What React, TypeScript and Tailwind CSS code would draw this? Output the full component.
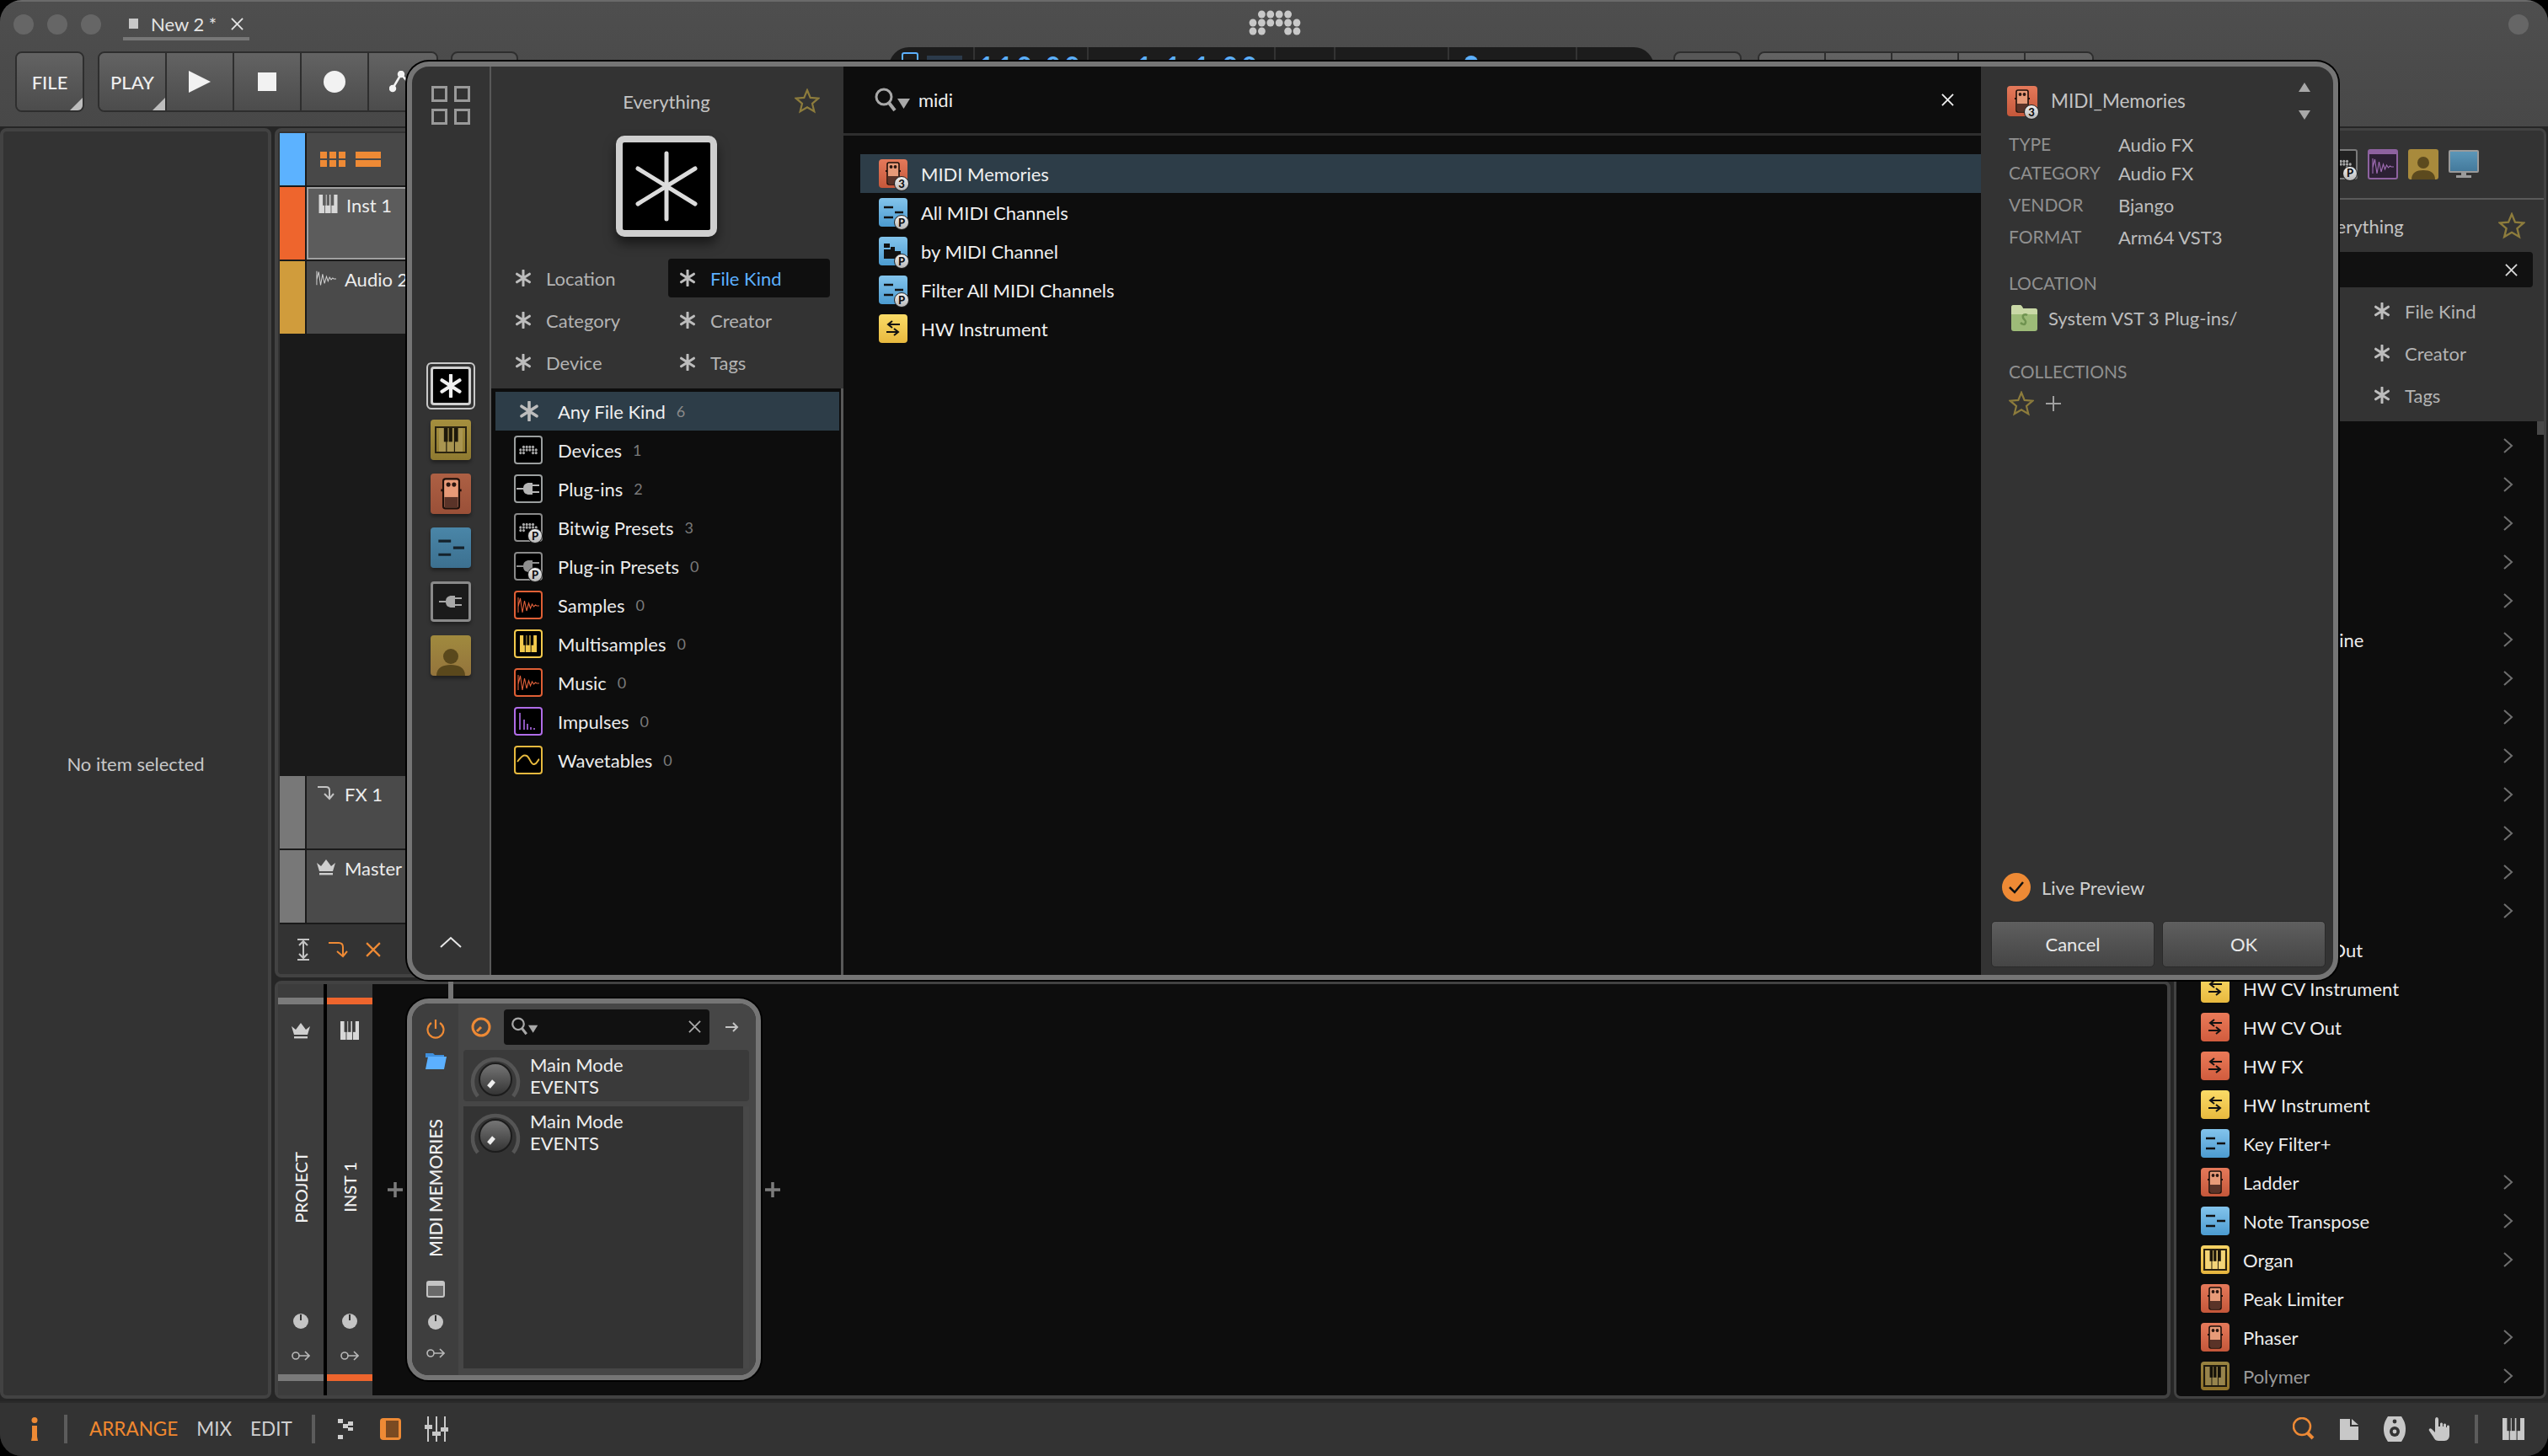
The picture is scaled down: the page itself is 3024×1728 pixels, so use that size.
// App.tsx
import type { ReactNode } from "react";

// --- small drawn glyphs ---
function Aster({ size = 20, color = "#bdbdbd" }: { size?: number; color?: string }) {
  return (
    <svg width={size} height={size} viewBox="0 0 20 20" fill="none" stroke={color} strokeWidth="3" strokeLinecap="round">
      <path d="M10 1v18M2.5 5.2l15 9.6M17.5 5.2l-15 9.6" />
    </svg>
  );
}

function Star({ size = 30, color = "#8d7c3c" }: { size?: number; color?: string }) {
  return (
    <svg width={size} height={size} viewBox="0 0 30 30" fill="none" stroke={color} strokeWidth="2.2">
      <path d="M15 2l3.7 8.9 9.6.8-7.3 6.2 2.3 9.4L15 22.3l-8.3 5 2.3-9.4-7.3-6.2 9.6-.8z" />
    </svg>
  );
}

function Close({ size = 16, color = "#d8d8d8", width = 2 }: { size?: number; color?: string; width?: number }) {
  return (
    <svg width={size} height={size} viewBox="0 0 16 16" fill="none" stroke={color} strokeWidth={width}>
      <path d="M1 1l14 14M15 1L1 15" />
    </svg>
  );
}

function Chevron() {
  return (
    <svg width="12" height="20" viewBox="0 0 12 20" fill="none" stroke="#6e6e6e" strokeWidth="2">
      <path d="M1 2l9 8-9 8" />
    </svg>
  );
}

function SearchDrop({ scale = 1 }: { scale?: number }) {
  return (
    <svg width={44 * scale} height={30 * scale} viewBox="0 0 44 30" fill="none">
      <circle cx="12" cy="11" r="9" stroke="#a8a8a8" strokeWidth="3" />
      <path d="M18 18l7 9" stroke="#a8a8a8" strokeWidth="4" />
      <path d="M28 13h15l-7.5 12z" fill="#a8a8a8" />
    </svg>
  );
}

function BitwigDots({ color = "#c8c8c8", w = 62, h = 30 }: { color?: string; w?: number; h?: number }) {
  const xs = [5, 15.4, 25.8, 36.2, 46.6, 57];
  const rows: [number, number[]][] = [
    [5, [1, 2, 3, 4]],
    [15, [0, 1, 2, 3, 4, 5]],
    [25, [0, 1, 4, 5]],
  ];
  return (
    <svg width={w} height={h} viewBox="0 0 62 30" fill={color}>
      {rows.map(([y, idx]) => idx.map((i) => <ellipse key={`${y}-${i}`} cx={xs[i]} cy={y} rx="4.4" ry="4.6" />))}
    </svg>
  );
}

function PianoGlyph({ w = 24, h = 24, color = "#d8d8d8", dark = "#4a4a4a" }: { w?: number; h?: number; color?: string; dark?: string }) {
  return (
    <svg width={w} height={h} viewBox="0 0 24 24">
      <rect x="0" y="0" width="24" height="24" fill={color} />
      <path d="M7.6 24V0M15.8 24V0" stroke={dark} strokeWidth="1" />
      <rect x="5" y="0" width="4" height="14" fill={dark} />
      <rect x="10" y="0" width="3.6" height="14" fill={dark} />
      <rect x="15.4" y="0" width="4" height="14" fill={dark} />
    </svg>
  );
}

function WaveGlyph({ color = "#e0603a", w = 26, h = 20 }: { color?: string; w?: number; h?: number }) {
  return (
    <svg width={w} height={h} viewBox="0 0 26 20" fill="none" stroke={color} strokeWidth="1.1">
      <path d="M1 1v18M1 12L3.5 2 6 19 8.5 5 11 17l2.5-9 2 6 2-5 2 3 2-2 1.5 1h3" />
    </svg>
  );
}

function PlugGlyph({ color = "#b4b4b4" }: { color?: string }) {
  return (
    <svg width="28" height="20" viewBox="0 0 28 20">
      <path d="M0 9h8v2H0z" fill={color} />
      <path d="M8 10c0-5 3-7 7-7h4v14h-4c-4 0-7-2-7-7z" fill={color} />
      <path d="M19 5h8v2h-8zM19 13h8v2h-8z" fill={color} />
    </svg>
  );
}

function DotsGlyph() {
  return <BitwigDots w={22} h={12} color="#a9a9a9" />;
}

function PedalGlyph({ scale = 1 }: { scale?: number }) {
  return (
    <svg width={20 * scale} height={28 * scale} viewBox="0 0 20 28">
      <rect x="3" y="1" width="14" height="26" rx="2" fill="#e79a78" stroke="#1d0f0a" strokeWidth="1.6" />
      <rect x="4" y="17" width="12" height="9" fill="#5a3328" />
      <circle cx="7.5" cy="6" r="1.9" fill="#2a1510" />
      <circle cx="12.5" cy="6" r="1.9" fill="#2a1510" />
      <path d="M1 11h2M17 11h2" stroke="#1d0f0a" strokeWidth="2" />
    </svg>
  );
}

function LinesGlyph({ color = "#111", scale = 1 }: { color?: string; scale?: number }) {
  return (
    <svg width={24 * scale} height={18 * scale} viewBox="0 0 24 18" stroke={color} strokeWidth="2.4">
      <path d="M1 3h11M14 9h10M1 15h11" />
    </svg>
  );
}

function ArrowsGlyph() {
  return (
    <svg width="18" height="20" viewBox="0 0 18 20" fill="none" stroke="#111" strokeWidth="2">
      <path d="M17 5H3M8 1L3 5l5 4" />
      <path d="M1 14h14M10 10l5 4-5 4" />
    </svg>
  );
}

function Badge({ text }: { text: string }) {
  return (
    <span className="absolute -right-[2px] -bottom-[4px] flex h-[18px] w-[18px] items-center justify-center rounded-full border border-[#222] bg-gradient-to-b from-[#f0f0f0] to-[#b8b8b8] text-[13px] leading-none font-black text-[#111]">
      {text}
    </span>
  );
}

type TileKind = "pedal" | "note" | "notefold" | "hwy" | "hwr" | "piano";

function Tile({ kind, badge, fade, big }: { kind: TileKind; badge?: string; fade?: boolean; big?: boolean }) {
  const bg: Record<TileKind, string> = {
    pedal: "bg-gradient-to-b from-[#e5795a] to-[#c4573a]",
    note: "bg-gradient-to-b from-[#83c4ec] to-[#4b9bd0]",
    notefold: "bg-gradient-to-b from-[#83c4ec] to-[#4b9bd0]",
    hwy: "bg-gradient-to-b from-[#fadb66] to-[#e8b93e]",
    hwr: "bg-gradient-to-b from-[#ea7a58] to-[#d15c3e]",
    piano: "bg-gradient-to-b from-[#f5d264] to-[#e6b53e]",
  };
  return (
    <div className={`relative flex ${big ? "h-[36px] w-[36px]" : "h-[34px] w-[34px]"} shrink-0 items-center justify-center rounded-[4px] ${bg[kind]} ${fade ? "opacity-60" : ""}`}>
      {kind === "pedal" && <PedalGlyph />}
      {kind === "note" && <LinesGlyph />}
      {kind === "notefold" && (
        <svg width="24" height="20" viewBox="0 0 24 20" fill="#111">
          <path d="M1 1h7v5H1zM1 8h8V5h5v5h7v9H1z" />
        </svg>
      )}
      {(kind === "hwy" || kind === "hwr") && <ArrowsGlyph />}
      {kind === "piano" && (
        <div className="border-2 border-[#2a2110]">
          <PianoGlyph w={24} h={22} color="#f3d479" dark="#1a1408" />
        </div>
      )}
      {badge && <Badge text={badge} />}
    </div>
  );
}

function OutlineIcon({ border, badge, children }: { border: string; badge?: boolean; children: ReactNode }) {
  return (
    <div className={`relative flex h-[34px] w-[34px] shrink-0 items-center justify-center rounded-[4px] border-2 ${border} bg-black`}>
      {children}
      {badge && <Badge text="P" />}
    </div>
  );
}

function Knob() {
  return (
    <svg width="60" height="58" viewBox="0 0 60 58" fill="none">
      <defs>
        <linearGradient id="knobfill" x1="0" y1="0" x2="0" y2="1">
          <stop offset="0" stopColor="#777" />
          <stop offset="1" stopColor="#333" />
        </linearGradient>
      </defs>
      <path d="M9 50A27 27 0 1 1 51 50" stroke="#555" strokeWidth="4.5" />
      <circle cx="30" cy="30" r="19" fill="url(#knobfill)" stroke="#1c1c1c" strokeWidth="2" />
      <path d="M22 39l6-7" stroke="#eee" strokeWidth="5" />
    </svg>
  );
}

function MiniCrown({ w = 24, h = 20, color = "#cfcfcf" }: { w?: number; h?: number; color?: string }) {
  return (
    <svg width={w} height={h} viewBox="0 0 24 20" fill={color}>
      <path d="M1 5l5 4 6-8 6 8 5-4-3 10H4z" />
      <rect x="4" y="17" width="16" height="2.4" />
    </svg>
  );
}

function PieDot() {
  return (
    <svg width="18" height="18" viewBox="0 0 18 18">
      <circle cx="9" cy="9" r="9" fill="#c4c4c4" />
      <path d="M9 1v7" stroke="#333" strokeWidth="2" />
    </svg>
  );
}

function KeyArrow() {
  return (
    <svg width="22" height="12" viewBox="0 0 22 12" fill="none" stroke="#b8b8b8" strokeWidth="1.6">
      <circle cx="5" cy="6" r="4" />
      <path d="M9 6h12M16 1l5 5-5 5" />
    </svg>
  );
}

function Plus({ size = 18, color = "#7c7c7c", width = 3.5 }: { size?: number; color?: string; width?: number }) {
  return (
    <svg width={size} height={size} viewBox="0 0 18 18" stroke={color} strokeWidth={width}>
      <path d="M9 0v18M0 9h18" />
    </svg>
  );
}

// --- header ---
function TransportBtn({ children, corner, w = "w-[80px]" }: { children?: ReactNode; corner?: boolean; w?: string }) {
  return (
    <div className={`relative flex h-full ${w} items-center justify-center border-r-2 border-[#2e2e2e] bg-gradient-to-b from-[#636363] to-[#4c4c4c] last:border-r-0`}>
      {children}
      {corner && <span className="absolute right-0 bottom-0 h-0 w-0 border-b-[15px] border-l-[15px] border-b-[#bdbdbd] border-l-transparent" />}
    </div>
  );
}

function Header() {
  return (
    <div className="h-[150px] shrink-0 border-t-2 border-[#6a6a6a] bg-gradient-to-b from-[#4e4e4e] to-[#484848]">
      <div className="flex h-[54px] items-center pl-[16px]">
        <div className="flex gap-[16px]">
          <span className="h-[24px] w-[24px] rounded-full bg-[#666]" />
          <span className="h-[24px] w-[24px] rounded-full bg-[#666]" />
          <span className="h-[24px] w-[24px] rounded-full bg-[#666]" />
        </div>
        <div className="ml-[26px] flex h-[36px] w-[150px] items-center self-start mt-[10px] border-b-4 border-[#777] pl-[7px] text-[22px] text-[#e4e4e4]">
          <span className="mr-[15px] h-[12px] w-[11px] bg-[#c8c8c8]" />
          <span className="w-[95px]">New 2 *</span>
          <Close size={15} color="#e4e4e4" />
        </div>
        <div className="ml-[1186px] self-start mt-[10px]">
          <BitwigDots />
        </div>
        <span className="ml-auto mr-[23px] h-[24px] w-[24px] rounded-full bg-[#666]" />
      </div>
      <div className="flex h-[94px] items-start pl-[18px]">
        <div className="mt-[5px] flex h-[72px] w-[82px] overflow-hidden rounded-[8px] border-2 border-[#2e2e2e]">
          <TransportBtn corner w="w-full">
            <span className="text-[22px] font-medium text-[#eee]">FILE</span>
          </TransportBtn>
        </div>
        <div className="mt-[5px] ml-[16px] flex h-[72px] overflow-hidden rounded-[8px] border-2 border-[#2e2e2e]">
          <TransportBtn corner>
            <span className="text-[22px] font-medium text-[#eee]">PLAY</span>
          </TransportBtn>
          <TransportBtn>
            <svg width="26" height="26" viewBox="0 0 26 26" fill="#f2f2f2">
              <path d="M0 0l26 13L0 26z" />
            </svg>
          </TransportBtn>
          <TransportBtn>
            <span className="h-[22px] w-[22px] bg-[#f2f2f2]" />
          </TransportBtn>
          <TransportBtn>
            <span className="h-[26px] w-[26px] rounded-full bg-[#f2f2f2]" />
          </TransportBtn>
          <TransportBtn>
            <svg width="32" height="26" viewBox="0 0 32 26" fill="none" stroke="#f2f2f2" strokeWidth="2.5">
              <circle cx="4" cy="21" r="3" fill="#f2f2f2" />
              <circle cx="14" cy="4" r="3" fill="#f2f2f2" />
              <path d="M4 21L14 4l12 14" />
            </svg>
          </TransportBtn>
        </div>
        <div className="mt-[5px] ml-[15px] h-[72px] w-[80px] rounded-[8px] border-2 border-[#2e2e2e] bg-[#575757]" />
        <div className="ml-[440px] flex h-[60px] w-[908px] rounded-t-[24px] bg-[#1c1c1c] text-[#5cb0ff]">
          <div className="flex w-[102px] gap-[10px] border-r-2 border-[#333] pl-[15px] pt-[6px]">
            <span className="block h-[20px] w-[20px] rounded-[3px] border-2 border-[#5cb0ff]" />
            <span className="mt-[4px] block h-[20px] w-[42px] bg-[#2b3a4a]" />
          </div>
          <div className="w-[135px] border-r-2 border-[#333] pt-[7px] text-center text-[32px] leading-[32px] font-bold tracking-[4px]">110.00</div>
          <div className="w-[222px] border-r-2 border-[#333] pt-[7px] pr-[16px] text-right text-[32px] leading-[32px] font-bold tracking-[4px]">1.1.1.00</div>
          <div className="w-[71px] border-r-2 border-[#333]" />
          <div className="w-[135px] border-r-2 border-[#333]" />
          <div className="w-[152px] border-r-2 border-[#333] pl-[18px] pt-[10px]">
            <span className="block h-[16px] w-[16px] rounded-full bg-[#5cb0ff]" />
          </div>
          <div className="flex-1" />
        </div>
        <div className="mt-[5px] ml-[23px] h-[72px] w-[81px] rounded-[8px] border-2 border-[#2e2e2e] bg-[#575757]" />
        <div className="mt-[5px] ml-[19px] flex h-[72px] overflow-hidden rounded-[8px] border-2 border-[#2e2e2e]">
          <TransportBtn w="w-[79px]" />
          <TransportBtn w="w-[79px]" />
          <TransportBtn w="w-[79px]" />
          <TransportBtn w="w-[79px]" />
          <TransportBtn w="w-[79px]" />
        </div>
      </div>
    </div>
  );
}

// --- arranger ---
function TrackRow({ strip, name, icon, selected, h = "h-[86px]" }: { strip: string; name?: string; icon?: ReactNode; selected?: boolean; h?: string }) {
  return (
    <div className={`flex ${h} gap-[2px]`}>
      <div className={`w-[30px] ${strip}`} />
      <div className={`flex flex-1 gap-[9px] pl-[10px] ${selected ? "border-2 border-[#a0a0a0] bg-[#5c5c5c] pt-[5px]" : "bg-[#4a4a4a] pt-[7px]"}`}>
        <div className="flex h-[26px] w-[26px] items-center justify-center">{icon}</div>
        <span className="text-[22px] leading-[30px] text-[#ececec]">{name}</span>
      </div>
    </div>
  );
}

function Arranger() {
  return (
    <div className="flex h-[1008px] shrink-0 rounded-[8px] border-[4px] border-[#424242] bg-[#333] pl-[2px] pt-[2px]">
      <div className="flex w-[500px] flex-col gap-[2px] bg-[#1a1a1a]">
        <div className="flex h-[62px] gap-[2px]">
          <div className="w-[30px] bg-[#5cb2ff]" />
          <div className="flex flex-1 items-center gap-[12px] bg-[#484848] pl-[16px]">
            <svg width="30" height="18" viewBox="0 0 30 18" fill="#ee8a35">
              <path d="M0 0h8v8H0zM11 0h8v8h-8zM22 0h8v8h-8zM0 10h8v8H0zM11 10h8v8h-8zM22 10h8v8h-8z" />
            </svg>
            <svg width="30" height="18" viewBox="0 0 30 18" fill="#ee8a35">
              <path d="M0 0h30v8H0zM0 10h30v8H0z" />
            </svg>
          </div>
        </div>
        <TrackRow strip="bg-[#ee652d]" name="Inst 1" icon={<PianoGlyph w={23} h={22} color="#d8d8d8" dark="#5c5c5c" />} selected />
        <TrackRow strip="bg-[#d09c3c]" name="Audio 2" icon={<WaveGlyph color="#cfcfcf" w={24} h={22} />} />
        <div className="flex-1 bg-[#1a1a1a]" />
        <TrackRow strip="bg-[#787878]" name="FX 1" icon={
          <svg width="20" height="18" viewBox="0 0 20 18" fill="none" stroke="#c4c4c4" strokeWidth="2">
            <path d="M0 2h10c3 0 4 2 4 4v9M8 10l6 6 5-6" />
          </svg>
        } />
        <TrackRow strip="bg-[#787878]" name="Master" icon={<MiniCrown />} />
        <div className="flex h-[59px] items-center gap-[21px] bg-[#333] pl-[20px]">
          <svg width="16" height="26" viewBox="0 0 16 26" fill="none" stroke="#c4c4c4" strokeWidth="2">
            <path d="M1 1h14M1 25h14M8 3v20M3 8l5-5 5 5M3 18l5 5 5-5" />
          </svg>
          <svg width="24" height="20" viewBox="0 0 24 20" fill="none" stroke="#ee8a35" strokeWidth="2">
            <path d="M1 2h12c3 0 5 2 5 5v10M11 12l7 6 5-6" />
          </svg>
          <Close size={18} color="#ee8a35" />
        </div>
      </div>
      <div className="flex-1 bg-[#0d0d0d]" />
    </div>
  );
}

// --- device panel ---
function ChainColumn({ strip, label, icon }: { strip: string; label: string; icon: ReactNode }) {
  return (
    <div className="relative flex h-full w-[54px] flex-col items-center bg-[#3c3c3c] pt-[16px]">
      <div className={`h-[8px] w-full ${strip}`} />
      <div className="mt-[19px] flex h-[24px] items-center">{icon}</div>
      <div className="flex h-[348px] items-center justify-center">
        <span className="rotate-180 text-[20px] font-medium text-[#f0f0f0] [writing-mode:vertical-rl]">{label}</span>
      </div>
      <div className="-mt-[24px]">
        <PieDot />
      </div>
      <div className="mt-[26px]">
        <KeyArrow />
      </div>
      <div className={`mt-[16px] h-[8px] w-full ${strip}`} />
    </div>
  );
}

function ParamRow({ active }: { active?: boolean }) {
  return (
    <div className={`flex h-[61px] items-start overflow-hidden rounded-[4px] pt-[5px] pl-[8px] ${active ? "bg-[#3a3a3a]" : ""}`}>
      <Knob />
      <div className="ml-[11px] text-[22px] leading-[26px] text-[#eeeeee]">
        <div>Main Mode</div>
        <div>EVENTS</div>
      </div>
    </div>
  );
}

function DeviceCard() {
  return (
    <div className="relative mt-[17px] h-[453px] w-[420px] shrink-0 rounded-[26px] border-[6px] border-[#757575] bg-[#333] shadow-[0_0_0_2px_#000]">
      <div className="absolute -top-[28px] left-[43px] h-[22px] w-[6px] bg-[#757575]" />
      <div className="flex h-full overflow-hidden rounded-[20px]">
        <div className="flex w-[55px] flex-col items-center bg-[#3e3e3e] pt-[18px]">
          <svg width="22" height="24" viewBox="0 0 22 24" fill="none" stroke="#ee8a35" strokeWidth="2.2">
            <path d="M11 1v11M6 5a9.5 9.5 0 1 0 10 0" />
          </svg>
          <svg className="mt-[14px]" width="26" height="22" viewBox="0 0 26 22">
            <path d="M1 3h9l2 2h11v3H1z" fill="#3f8fdc" />
            <path d="M4 7h22l-3 15H1z" fill="#5cb0ff" />
          </svg>
          <div className="flex h-[282px] items-center justify-center">
            <span className="rotate-180 text-[21px] font-medium whitespace-nowrap text-[#f0f0f0] [writing-mode:vertical-rl]">MIDI MEMORIES</span>
          </div>
          <span className="-mt-[31px] h-[20px] w-[22px] rounded-[3px] border-2 border-[#c4c4c4] border-t-[6px] bg-[#6a6a6a]" />
          <div className="mt-[20px]">
            <PieDot />
          </div>
          <div className="mt-[22px]">
            <KeyArrow />
          </div>
        </div>
        <div className="flex flex-1 flex-col bg-[#464646] pr-[8px] pl-[6px]">
          <div className="flex h-[55px] shrink-0 items-center">
            <svg className="ml-[9px]" width="24" height="24" viewBox="0 0 24 24" fill="none" stroke="#ee8a35" strokeWidth="3">
              <circle cx="12" cy="12" r="10" />
              <path d="M7 17l5-5" />
            </svg>
            <div className="ml-[15px] flex h-[42px] w-[244px] items-center justify-between rounded-[4px] bg-[#111] pr-[10px] pl-[8px]">
              <SearchDrop scale={0.75} />
              <Close size={15} color="#a8a8a8" />
            </div>
            <svg className="ml-[19px]" width="16" height="12" viewBox="0 0 16 12" fill="none" stroke="#c4c4c4" strokeWidth="2">
              <path d="M0 6h14M9 1l5 5-5 5" />
            </svg>
          </div>
          <ParamRow active />
          <div className="relative mt-[6px] flex-1 bg-[#333] pr-[7px]">
            <ParamRow />
            <div className="absolute top-0 right-0 bottom-0 w-[7px] bg-[#484848]" />
          </div>
          <div className="h-[8px] shrink-0" />
        </div>
      </div>
    </div>
  );
}

function DevicePanel() {
  return (
    <div className="mt-[4px] flex min-h-0 flex-1 rounded-[8px] border-[4px] border-[#424242] bg-[#0d0d0d]">
      <ChainColumn strip="bg-[#7a7a7a]" label="PROJECT" icon={<MiniCrown />} />
      <div className="w-[4px] bg-black" />
      <ChainColumn strip="bg-[#ee652d]" label="INST 1" icon={<PianoGlyph w={22} h={22} color="#d8d8d8" dark="#3c3c3c" />} />
      <div className="flex w-[41px] items-center justify-center pl-[13px]">
        <Plus />
      </div>
      <DeviceCard />
      <div className="flex w-[29px] items-center justify-end pr-[6px]">
        <Plus />
      </div>
    </div>
  );
}

// --- right browser ---
const browserRows: { name: string; kind?: TileKind; more?: boolean; fade?: boolean }[] = [
  { name: "Amp", kind: "pedal", more: true },
  { name: "Arpeggiator", kind: "note", more: true },
  { name: "Bit-8", kind: "pedal", more: true },
  { name: "Blur", kind: "pedal", more: true },
  { name: "Chorus", kind: "pedal", more: true },
  { name: "Drum Machine", kind: "piano", more: true },
  { name: "Delay-1", kind: "pedal", more: true },
  { name: "Delay-2", kind: "pedal", more: true },
  { name: "Dynamics", kind: "pedal", more: true },
  { name: "EQ-5", kind: "pedal", more: true },
  { name: "Filter", kind: "pedal", more: true },
  { name: "Flanger", kind: "pedal", more: true },
  { name: "Fuzz", kind: "pedal", more: true },
  { name: "HW Clock Out", kind: "hwr" },
  { name: "HW CV Instrument", kind: "hwy" },
  { name: "HW CV Out", kind: "hwr" },
  { name: "HW FX", kind: "hwr" },
  { name: "HW Instrument", kind: "hwy" },
  { name: "Key Filter+", kind: "note" },
  { name: "Ladder", kind: "pedal", more: true },
  { name: "Note Transpose", kind: "note", more: true },
  { name: "Organ", kind: "piano", more: true },
  { name: "Peak Limiter", kind: "pedal" },
  { name: "Phaser", kind: "pedal", more: true },
  { name: "Polymer", kind: "piano", more: true, fade: true },
];

function SmallFilter({ label }: { label: string }) {
  return (
    <div className="flex h-[50px] items-center">
      <Aster />
      <span className="ml-[17px] text-[22px] text-[#b4b4b4]">{label}</span>
    </div>
  );
}

function BrowserPanel() {
  return (
    <div className="flex w-[442px] shrink-0 flex-col overflow-hidden rounded-[8px] border-[3px] border-[#424242] bg-[#333]">
      <div className="flex h-[82px] shrink-0 items-center justify-end gap-[12px] border-b-2 border-[#5a5a5a] pr-[77px] pb-[1px]">
        <div className="relative flex h-[36px] w-[36px] items-center justify-center rounded-[3px] border-2 border-[#7a7a7a] bg-[#222]">
          <DotsGlyph />
          <Badge text="P" />
        </div>
        <div className="flex h-[36px] w-[36px] items-center justify-center rounded-[3px] border-x-2 border-t-[6px] border-b-2 border-[#8e62a0] bg-[#2c2034]">
          <WaveGlyph color="#a06cb4" w={26} h={20} />
        </div>
        <div className="flex h-[36px] w-[36px] items-end justify-center overflow-hidden rounded-[3px] bg-[#a88a3c]">
          <svg width="28" height="30" viewBox="0 0 28 30" fill="#5c4a1e">
            <circle cx="14" cy="10" r="7" />
            <path d="M0 30c0-8 6-11 14-11s14 3 14 11z" />
          </svg>
        </div>
        <div className="flex w-[36px] flex-col items-center">
          <div className="h-[27px] w-[36px] rounded-[2px] border-2 border-[#9a9a9a] bg-gradient-to-b from-[#5b96b8] to-[#447a9c]" />
          <div className="h-[3px] w-[6px] bg-[#9a9a9a]" />
          <div className="h-[3px] w-[18px] bg-[#9a9a9a]" />
        </div>
      </div>
      <div className="grid h-[62px] shrink-0 grid-cols-[64px_1fr_64px] items-center">
        <span />
        <span className="text-center text-[22px] text-[#c4c4c4]">Everything</span>
        <span className="ml-[10px]"><Star size={32} /></span>
      </div>
      <div className="ml-[20px] flex h-[42px] w-[403px] shrink-0 items-center justify-end rounded-[4px] bg-[#111] pr-[18px]">
        <Close size={15} color="#d8d8d8" />
      </div>
      <div className="grid shrink-0 grid-cols-[198px_1fr] pt-[3px] pb-[6px] pl-[36px]">
        <SmallFilter label="Location" />
        <SmallFilter label="File Kind" />
        <SmallFilter label="Category" />
        <SmallFilter label="Creator" />
        <SmallFilter label="Device" />
        <SmallFilter label="Tags" />
      </div>
      <div className="relative flex-1 overflow-hidden bg-[#0d0d0d] pt-[6px]">
        <div className="absolute top-0 right-0 h-[16px] w-[8px] bg-[#484848]" />
        {browserRows.map((r) => (
          <div key={r.name} className="flex h-[46px] items-center pr-[36px] pl-[29px]">
            <Tile kind={r.kind ?? "pedal"} fade={r.fade} />
            <span className={`ml-[16px] flex-1 text-[22px] ${r.fade ? "text-[#9a9a9a]" : "text-[#ececec]"}`}>{r.name}</span>
            {r.more && <Chevron />}
          </div>
        ))}
      </div>
    </div>
  );
}

// --- status bar ---
function Sep({ ml }: { ml: string }) {
  return <span className={`block h-[34px] w-[4px] bg-[#5c5c5c] ${ml}`} />;
}

function StatusBar() {
  return (
    <div className="flex h-[65px] shrink-0 items-center border-t-2 border-[#2a2a2a] bg-[#333] pb-[2px]">
      <svg className="ml-[37px]" width="8" height="28" viewBox="0 0 8 28" fill="#ee8a35">
        <circle cx="4" cy="3.5" r="3.5" />
        <path d="M1 10h6v13l1 5H0l1-5z" />
      </svg>
      <Sep ml="ml-[31px]" />
      <span className="ml-[26px] text-[22.5px] text-[#f0882f]">ARRANGE</span>
      <span className="ml-[22px] text-[22.5px] text-[#d0d0d0]">MIX</span>
      <span className="ml-[22px] text-[22.5px] text-[#d0d0d0]">EDIT</span>
      <Sep ml="ml-[23px]" />
      <svg className="ml-[27px]" width="18" height="24" viewBox="0 0 18 24" fill="#d0d0d0">
        <path d="M0 0h6v5H0zM6 6h6v5H6zM12 3h6v5h-6zM12 10h6v4h-6zM0 19h6v5H0z" />
      </svg>
      <span className="ml-[32px] flex h-[26px] w-[25px] justify-end rounded-[4px] bg-[#ee8a35] py-[3px] pr-[3px]">
        <span className="w-[15px] bg-[#7a4a22]" />
      </span>
      <svg className="ml-[28px]" width="28" height="30" viewBox="0 0 28 30" stroke="#c8c8c8" strokeWidth="2" fill="#c8c8c8">
        <path d="M4 0v30M14 0v30M24 0v30" />
        <path d="M0 11h8v3H0zM10 19h8v3h-8zM20 14h8v3h-8z" />
      </svg>
      <div className="ml-auto flex items-center pr-[28px]">
        <svg width="26" height="28" viewBox="0 0 26 28" fill="none" stroke="#ee8a35" strokeWidth="2.5">
          <circle cx="11" cy="11" r="10" />
          <path d="M18 19l6 6" strokeWidth="4" />
        </svg>
        <svg className="ml-[30px]" width="22" height="26" viewBox="0 0 22 26" fill="#c8c8c8">
          <path d="M0 1h12v9h10v16H0zM14 1l8 7h-8z" />
        </svg>
        <svg className="ml-[30px]" width="26" height="30" viewBox="0 0 26 30">
          <path d="M5 0h16c4 6 5 10 5 15s-1 9-5 15H5C1 24 0 20 0 15S1 6 5 0z" fill="#c8c8c8" />
          <circle cx="13" cy="6" r="2.4" fill="#333" />
          <circle cx="13" cy="18" r="6" fill="#333" />
          <circle cx="13" cy="18" r="2.4" fill="#c8c8c8" />
        </svg>
        <svg className="ml-[27px]" width="26" height="28" viewBox="0 0 26 28" fill="#c8c8c8">
          <path d="M8 3c0-4 4-4 4 0v8l2 0v-3c0-2 3-2 3 0v3h1V9c0-2 3-2 3 0v3h1v-1c0-2 3-2 3 0v10c0 4-2 7-6 7h-7c-4 0-5-3-7-6L1 16c-1-2 1-4 3-2l4 4z" />
        </svg>
        <Sep ml="ml-[29px]" />
        <span className="ml-[29px]">
          <PianoGlyph w={26} h={26} color="#c8c8c8" dark="#333" />
        </span>
      </div>
    </div>
  );
}

// --- browser dialog ---
const fileKinds: { label: string; n: number; border: string; glyph: ReactNode; badge?: boolean }[] = [
  { label: "Devices", n: 1, border: "border-[#9b9f9f]", glyph: <DotsGlyph /> },
  { label: "Plug-ins", n: 2, border: "border-[#9b9f9f]", glyph: <PlugGlyph /> },
  { label: "Bitwig Presets", n: 3, border: "border-[#8a8a8a]", glyph: <DotsGlyph />, badge: true },
  { label: "Plug-in Presets", n: 0, border: "border-[#8a8a8a]", glyph: <PlugGlyph color="#8e8e8e" />, badge: true },
  { label: "Samples", n: 0, border: "border-[#df5f35]", glyph: <WaveGlyph /> },
  {
    label: "Multisamples",
    n: 0,
    border: "border-[#f2c94c]",
    glyph: <PianoGlyph w={24} h={20} color="#f2c94c" dark="#000" />,
  },
  { label: "Music", n: 0, border: "border-[#df5f35]", glyph: <WaveGlyph /> },
  {
    label: "Impulses",
    n: 0,
    border: "border-[#b06ce8]",
    glyph: (
      <svg width="24" height="20" viewBox="0 0 24 20" stroke="#b06ce8" strokeWidth="1.6">
        <path d="M2 0v20M7 8v12M11 13v7M15 17v3M19 18v2" />
      </svg>
    ),
  },
  {
    label: "Wavetables",
    n: 0,
    border: "border-[#e6b93e]",
    glyph: (
      <svg width="28" height="20" viewBox="0 0 28 20" fill="none" stroke="#e6b93e" strokeWidth="2">
        <path d="M1 12c4-5 7-9 11-7s5 11 9 10 4-5 6-6" />
      </svg>
    ),
  },
];

const results: { label: string; kind: TileKind; badge?: string }[] = [
  { label: "MIDI Memories", kind: "pedal", badge: "3" },
  { label: "All MIDI Channels", kind: "note", badge: "P" },
  { label: "by MIDI Channel", kind: "notefold", badge: "P" },
  { label: "Filter All MIDI Channels", kind: "note", badge: "P" },
  { label: "HW Instrument", kind: "hwy" },
];

const metaRows = [
  { k: "TYPE", v: "Audio FX", h: "h-[34px]" },
  { k: "CATEGORY", v: "Audio FX", h: "h-[34px]" },
  { k: "VENDOR", v: "Bjango", h: "h-[42px]" },
  { k: "FORMAT", v: "Arm64 VST3", h: "h-[34px]" },
];

function BrowserDialog() {
  return (
    <div className="absolute top-[71px] left-[481px] h-[1094px] w-[2296px] rounded-[28px] bg-black p-[2px]">
      <div className="flex h-full overflow-hidden rounded-[26px] border-[6px] border-[#757575] bg-[#333]">
        {/* content type rail */}
        <div className="flex w-[94px] shrink-0 flex-col items-center border-r-2 border-[#585858] pt-[23px]">
          <div className="grid grid-cols-[19px_19px] gap-[8px]">
            <span className="h-[19px] border-[3px] border-[#9a9a9a]" />
            <span className="h-[19px] border-[3px] border-[#9a9a9a]" />
            <span className="h-[19px] border-[3px] border-[#9a9a9a]" />
            <span className="h-[19px] border-[3px] border-[#9a9a9a]" />
          </div>
          <div className="mt-[282px] flex h-[56px] w-[58px] items-center justify-center rounded-[6px] border-2 border-[#c8c8c8]">
            <div className="flex h-[46px] w-[48px] items-center justify-center rounded-[4px] border-[3px] border-[#d0d0d0] bg-black">
              <Aster size={28} color="#f0f0f0" />
            </div>
          </div>
          <div className="mt-[12px] flex flex-col gap-[16px]">
            <div className="flex h-[48px] w-[48px] items-center justify-center rounded-[4px] bg-gradient-to-b from-[#a58f3e] to-[#8f7a30] shadow-[0_3px_4px_#0006]">
              <div className="border-2 border-[#2b2410]">
                <PianoGlyph w={34} h={28} color="#a99550" dark="#1e190a" />
              </div>
            </div>
            <div className="flex h-[48px] w-[48px] items-center justify-center rounded-[4px] bg-gradient-to-b from-[#ad6044] to-[#9a5038] shadow-[0_3px_4px_#0006]">
              <PedalGlyph scale={1.35} />
            </div>
            <div className="flex h-[48px] w-[48px] items-center justify-center rounded-[4px] bg-gradient-to-b from-[#4a86a8] to-[#3c7090] shadow-[0_3px_4px_#0006]">
              <LinesGlyph scale={1.35} color="#15222b" />
            </div>
            <div className="flex h-[48px] w-[48px] items-center justify-center rounded-[4px] border-[3px] border-[#8a8a8a] bg-[#1b1b1b] shadow-[0_3px_4px_#0006]">
              <PlugGlyph color="#a8a8a8" />
            </div>
            <div className="flex h-[48px] w-[48px] items-end justify-center overflow-hidden rounded-[4px] bg-gradient-to-b from-[#a08a3e] to-[#94743c] shadow-[0_3px_4px_#0006]">
              <svg width="36" height="36" viewBox="0 0 36 36" fill="#5a481c">
                <circle cx="18" cy="13" r="9" />
                <path d="M1 36c0-10 8-13 17-13s17 3 17 13z" />
              </svg>
            </div>
          </div>
          <svg className="mt-auto mb-[32px]" width="26" height="14" viewBox="0 0 26 14" fill="none" stroke="#e8e8e8" strokeWidth="2">
            <path d="M1 13L13 2l12 11" />
          </svg>
        </div>

        {/* filters */}
        <div className="flex w-[418px] shrink-0 flex-col">
          <div className="grid h-[82px] shrink-0 grid-cols-[66px_1fr_68px] items-center">
            <span />
            <span className="text-center text-[22px] text-[#c4c4c4]">Everything</span>
            <span className="ml-[10px]"><Star /></span>
          </div>
          <div className="ml-[148px] flex h-[120px] w-[120px] shrink-0 items-center justify-center rounded-[10px] border-[8px] border-[#cfcfcf] bg-black shadow-[0_8px_14px_#0008]">
            <svg width="76" height="84" viewBox="0 0 76 84" fill="none" stroke="#dcdcdc" strokeWidth="5" strokeLinecap="round">
              <path d="M38 3v78M4 21l68 42M72 21L4 63" />
            </svg>
          </div>
          <div className="mt-[24px] grid shrink-0 grid-cols-[210px_192px]">
            <div className="pl-[28px]"><SmallFilter label="Location" /></div>
            <div className="flex h-[46px] items-center self-center rounded-[4px] bg-[#0f0f0f] pl-[13px]">
              <Aster />
              <span className="ml-[17px] text-[22px] text-[#5cb0ff]">File Kind</span>
            </div>
            <div className="pl-[28px]"><SmallFilter label="Category" /></div>
            <div className="pl-[13px]"><SmallFilter label="Creator" /></div>
            <div className="pl-[28px]"><SmallFilter label="Device" /></div>
            <div className="pl-[13px]"><SmallFilter label="Tags" /></div>
          </div>
          <div className="mt-[6px] min-h-0 flex-1 border-r-[3px] border-[#585858] bg-[#0d0d0d] pt-[4px] pr-[2px] pl-[5px]">
            <div className="flex h-[46px] items-center bg-[#2d3d48] pl-[28px]">
              <Aster size={24} />
              <span className="ml-[22px] text-[22px] text-[#f0f0f0]">Any File Kind</span>
              <span className="ml-[13px] text-[18px] text-[#8a8a8a]">6</span>
            </div>
            {fileKinds.map((f) => (
              <div key={f.label} className="flex h-[46px] items-center pl-[22px]">
                <OutlineIcon border={f.border} badge={f.badge}>
                  {f.glyph}
                </OutlineIcon>
                <span className="ml-[18px] text-[22px] text-[#ececec]">{f.label}</span>
                <span className="ml-[13px] text-[18px] text-[#7a7a7a]">{f.n}</span>
              </div>
            ))}
          </div>
        </div>

        {/* results */}
        <div className="flex min-w-0 flex-1 flex-col bg-[#0d0d0d]">
          <div className="flex h-[82px] shrink-0 items-center border-b-[3px] border-[#2e2e2e] pr-[32px] pl-[36px]">
            <SearchDrop />
            <span className="ml-[9px] text-[22px] text-[#f0f0f0]">midi</span>
            <span className="ml-auto"><Close size={15} color="#eeeeee" /></span>
          </div>
          <div className="ml-[20px] pt-[22px]">
            {results.map((r, i) => (
              <div key={r.label} className={`flex h-[46px] items-center pl-[22px] ${i === 0 ? "bg-[#2d3d48]" : ""}`}>
                <Tile kind={r.kind} badge={r.badge} />
                <span className="ml-[16px] text-[22px] text-[#f0f0f0]">{r.label}</span>
              </div>
            ))}
          </div>
        </div>

        {/* inspector */}
        <div className="flex w-[418px] shrink-0 flex-col pt-[23px]">
          <div className="flex h-[36px] shrink-0 items-center pl-[31px]">
            <Tile kind="pedal" badge="3" big />
            <span className="ml-[16px] text-[22.5px] text-[#c4c4c4]">MIDI_Memories</span>
            <div className="mr-[27px] mb-[1px] ml-auto flex flex-col gap-[22px]">
              <svg width="14" height="11" viewBox="0 0 14 11" fill="#a8a8a8"><path d="M7 0l7 11H0z" /></svg>
              <svg width="14" height="11" viewBox="0 0 14 11" fill="#a8a8a8"><path d="M0 0h14L7 11z" /></svg>
            </div>
          </div>
          <div className="mt-[16px] pl-[33px]">
            {metaRows.map((m) => (
              <div key={m.k} className={`flex ${m.h} items-center`}>
                <span className="w-[130px] text-[21px] text-[#909090]">{m.k}</span>
                <span className="text-[22px] text-[#bdbdbd]">{m.v}</span>
              </div>
            ))}
          </div>
          <div className="mt-[26px] h-[24px] pl-[33px] text-[21px] leading-[24px] text-[#909090]">LOCATION</div>
          <div className="mt-[14px] flex h-[30px] items-center pl-[36px]">
            <svg width="31" height="31" viewBox="0 0 31 31">
              <path d="M0 3c0-2 1-3 3-3h7c2 0 3 2 4 4h14c2 0 3 1 3 3v21c0 2-1 3-3 3H3c-2 0-3-1-3-3z" fill="#9dbb78" />
              <path d="M0 3c0-2 1-3 3-3h7c2 0 3 2 4 4h14c2 0 3 1 3 3v4H0z" fill="#c9d8a6" />
              <path d="M19 12c-3-2-6 0-5 3s4 3 3 6-4 2-6 0" fill="none" stroke="#6f9350" strokeWidth="2.5" />
            </svg>
            <span className="ml-[13px] text-[22px] text-[#bdbdbd]">System VST 3 Plug-ins/</span>
          </div>
          <div className="mt-[37px] h-[24px] pl-[33px] text-[21px] leading-[24px] text-[#909090]">COLLECTIONS</div>
          <div className="mt-[11px] flex h-[30px] items-center pl-[33px]">
            <Star />
            <span className="ml-[14px]"><Plus color="#a0a0a0" width={2} /></span>
          </div>
          <div className="mt-auto flex h-[34px] items-center pl-[25px]">
            <span className="flex h-[34px] w-[34px] items-center justify-center rounded-full bg-[#ee8a35]">
              <svg width="20" height="16" viewBox="0 0 20 16" fill="none" stroke="#111" strokeWidth="2.5">
                <path d="M2 8l6 6L18 2" />
              </svg>
            </span>
            <span className="ml-[13px] text-[22px] text-[#d0d0d0]">Live Preview</span>
          </div>
          <div className="mt-[23px] flex gap-[9px] pb-[9px] pl-[12px]">
            <div className="flex h-[55px] w-[194px] items-center justify-center rounded-[5px] border border-[#2a2a2a] bg-gradient-to-b from-[#5f5f5f] to-[#454545] text-[22px] text-[#e8e8e8]">Cancel</div>
            <div className="flex h-[55px] w-[194px] items-center justify-center rounded-[5px] border border-[#2a2a2a] bg-gradient-to-b from-[#5f5f5f] to-[#454545] text-[22px] text-[#e8e8e8]">OK</div>
          </div>
        </div>
      </div>
    </div>
  );
}

export default function App() {
  return (
    <div className="relative h-[1728px] w-[3024px] overflow-hidden bg-black font-[family-name:Lato,sans-serif]">
      <div className="flex h-full flex-col overflow-hidden rounded-[26px] bg-[#262626]">
        <Header />
        <main className="flex min-h-0 flex-1 gap-[4px] pr-[2px] pt-[2px] pb-[3px]">
          <div className="flex w-[322px] shrink-0 items-center justify-center rounded-[8px] border-[4px] border-[#424242] bg-[#333]">
            <span className="text-[22px] text-[#c8c8c8]">No item selected</span>
          </div>
          <div className="flex min-w-0 flex-1 flex-col">
            <Arranger />
            <DevicePanel />
          </div>
          <BrowserPanel />
        </main>
        <StatusBar />
      </div>
      <BrowserDialog />
    </div>
  );
}
